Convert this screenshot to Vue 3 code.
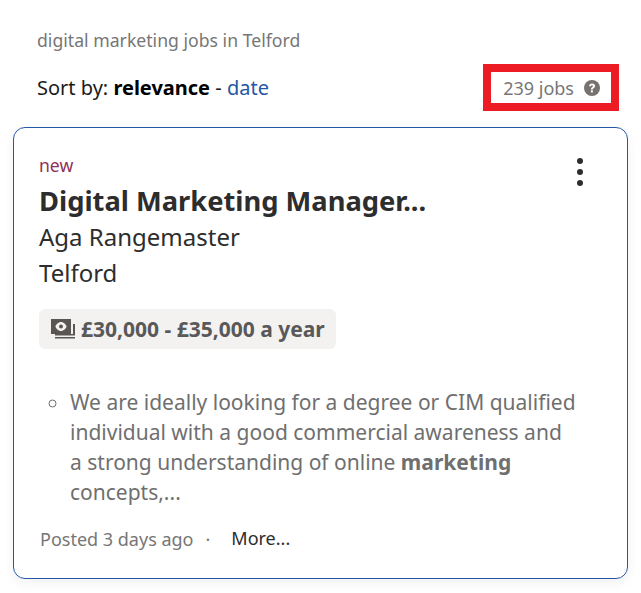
<template>
  <div class="page">
    <div class="query">digital marketing jobs in Telford</div>
    <div class="sort-row">
      <div class="sort">Sort by: <b>relevance</b> - <a class="date">date</a></div>
      <div class="count">
        <span>239 jobs</span>
        <svg class="help" viewBox="0 0 16 16" width="16" height="16">
          <circle cx="8" cy="8" r="8" fill="#767270" />
          <path d="M5 6.200C5.100 4.500 6.300 3.400 8.100 3.400c1.800 0 3 1 3 2.600 0 1.100-.6 1.700-1.400 2.200-.7.500-.9.700-.9 1.300H6.900c0-1.100.3-1.700 1.100-2.200.7-.5 1-.8 1-1.200 0-.6-.4-.9-1-.9-.6 0-1 .4-1.100 1z" fill="#fff" />
          <rect x="6.900" y="10.300" width="2" height="2.100" rx=".4" fill="#fff" />
        </svg>
      </div>
    </div>
    <div class="card">
      <div class="dots"><i></i><i></i><i></i></div>
      <div class="new">new</div>
      <h2 class="title">Digital Marketing Manager...</h2>
      <div class="line">Aga Rangemaster</div>
      <div class="line">Telford</div>
      <div class="salary">
        <svg class="money" viewBox="0 0 24 20" width="24" height="20">
          <path fill-rule="evenodd" d="M0 0h20v15H0zM10 3c-2.800 0-5 2.800-5.600 4.500C5 9.200 7.200 12 10 12s5-2.800 5.600-4.500C15 5.800 12.800 3 10 3z" fill="#595654" />
          <circle cx="10" cy="7.500" r="2" fill="#595654" />
          <path d="M22 5h2v11.500H4V15h18zM4 18h20v1.500H4z" fill="#595654" />
        </svg>
        <span>£30,000 - £35,000 a year</span>
      </div>
      <ul class="snippet">
        <li>We are ideally looking for a degree or CIM qualified individual with a good commercial awareness and a strong understanding of online <b>marketing</b> concepts,...</li>
      </ul>
      <div class="foot">
        <span class="posted">Posted 3 days ago</span>
        <span class="sep">·</span>
        <span class="more">More...</span>
      </div>
    </div>
  </div>
</template>

<script setup>
</script>

<style scoped>
.page {
  width: 641px;
  height: 593px;
  overflow: hidden;
  box-sizing: border-box;
  padding: 28px 13px 0;
  font-family: "Noto Sans", sans-serif;
  background: #fff;
}
.query {
  margin-left: 24px;
  font-size: 17.65px;
  line-height: 24px;
  color: #767676;
}
.sort-row {
  display: flex;
  justify-content: space-between;
  align-items: center;
  margin-top: 12px;
  margin-left: 24px;
  margin-right: 9px;
}
.sort {
  font-size: 20px;
  color: #1a1a1a;
}
.sort b {
  color: #000;
}
.date {
  color: #2557a7;
}
.count {
  display: flex;
  align-items: center;
  gap: 10px;
  border: 8px solid #ed1c24;
  padding: 0 11px 0 12px;
  height: 47px;
  box-sizing: border-box;
  font-size: 18px;
  color: #767676;
}
.card {
  position: relative;
  margin-top: 16px;
  width: 615px;
  height: 452px;
  box-sizing: border-box;
  padding: 26px 25px 0;
  border: 1px solid #2557a7;
  border-radius: 12px;
  box-shadow: 0 4px 12px rgba(0, 0, 0, 0.06);
}
.dots {
  position: absolute;
  top: 30px;
  right: 44px;
  display: flex;
  flex-direction: column;
  gap: 5px;
}
.dots i {
  width: 6px;
  height: 6px;
  border-radius: 50%;
  background: #2d2d2d;
}
.new {
  font-size: 17.6px;
  line-height: 24px;
  color: #8f3058;
  margin-top: -1px;
}
.title {
  margin: 5px 0 0;
  font-size: 27.3px;
  line-height: 38px;
  font-weight: 700;
  color: #2d2d2d;
}
.line {
  font-size: 24px;
  line-height: 36px;
  color: #2d2d2d;
}
.title + .line {
  margin-top: -1px;
}
.salary {
  display: inline-flex;
  align-items: center;
  gap: 6px;
  margin-top: 18px;
  padding: 0 11px 0 12px;
  height: 40px;
  border-radius: 6px;
  background: #f3f2f1;
  font-size: 21px;
  font-weight: 700;
  color: #595959;
}
.snippet {
  margin: 38px 25px 0 0;
  padding: 0 0 0 31px;
  list-style: circle;
  font-size: 21px;
  line-height: 30px;
  color: #6f6f6f;
}
.foot {
  display: flex;
  align-items: center;
  margin-top: 19px;
  margin-left: 1px;
  font-size: 18px;
  color: #767676;
}
.sep {
  margin-left: 12px;
}
.more {
  margin-left: 21px;
  margin-bottom: 2px;
  color: #2d2d2d;
}
</style>
